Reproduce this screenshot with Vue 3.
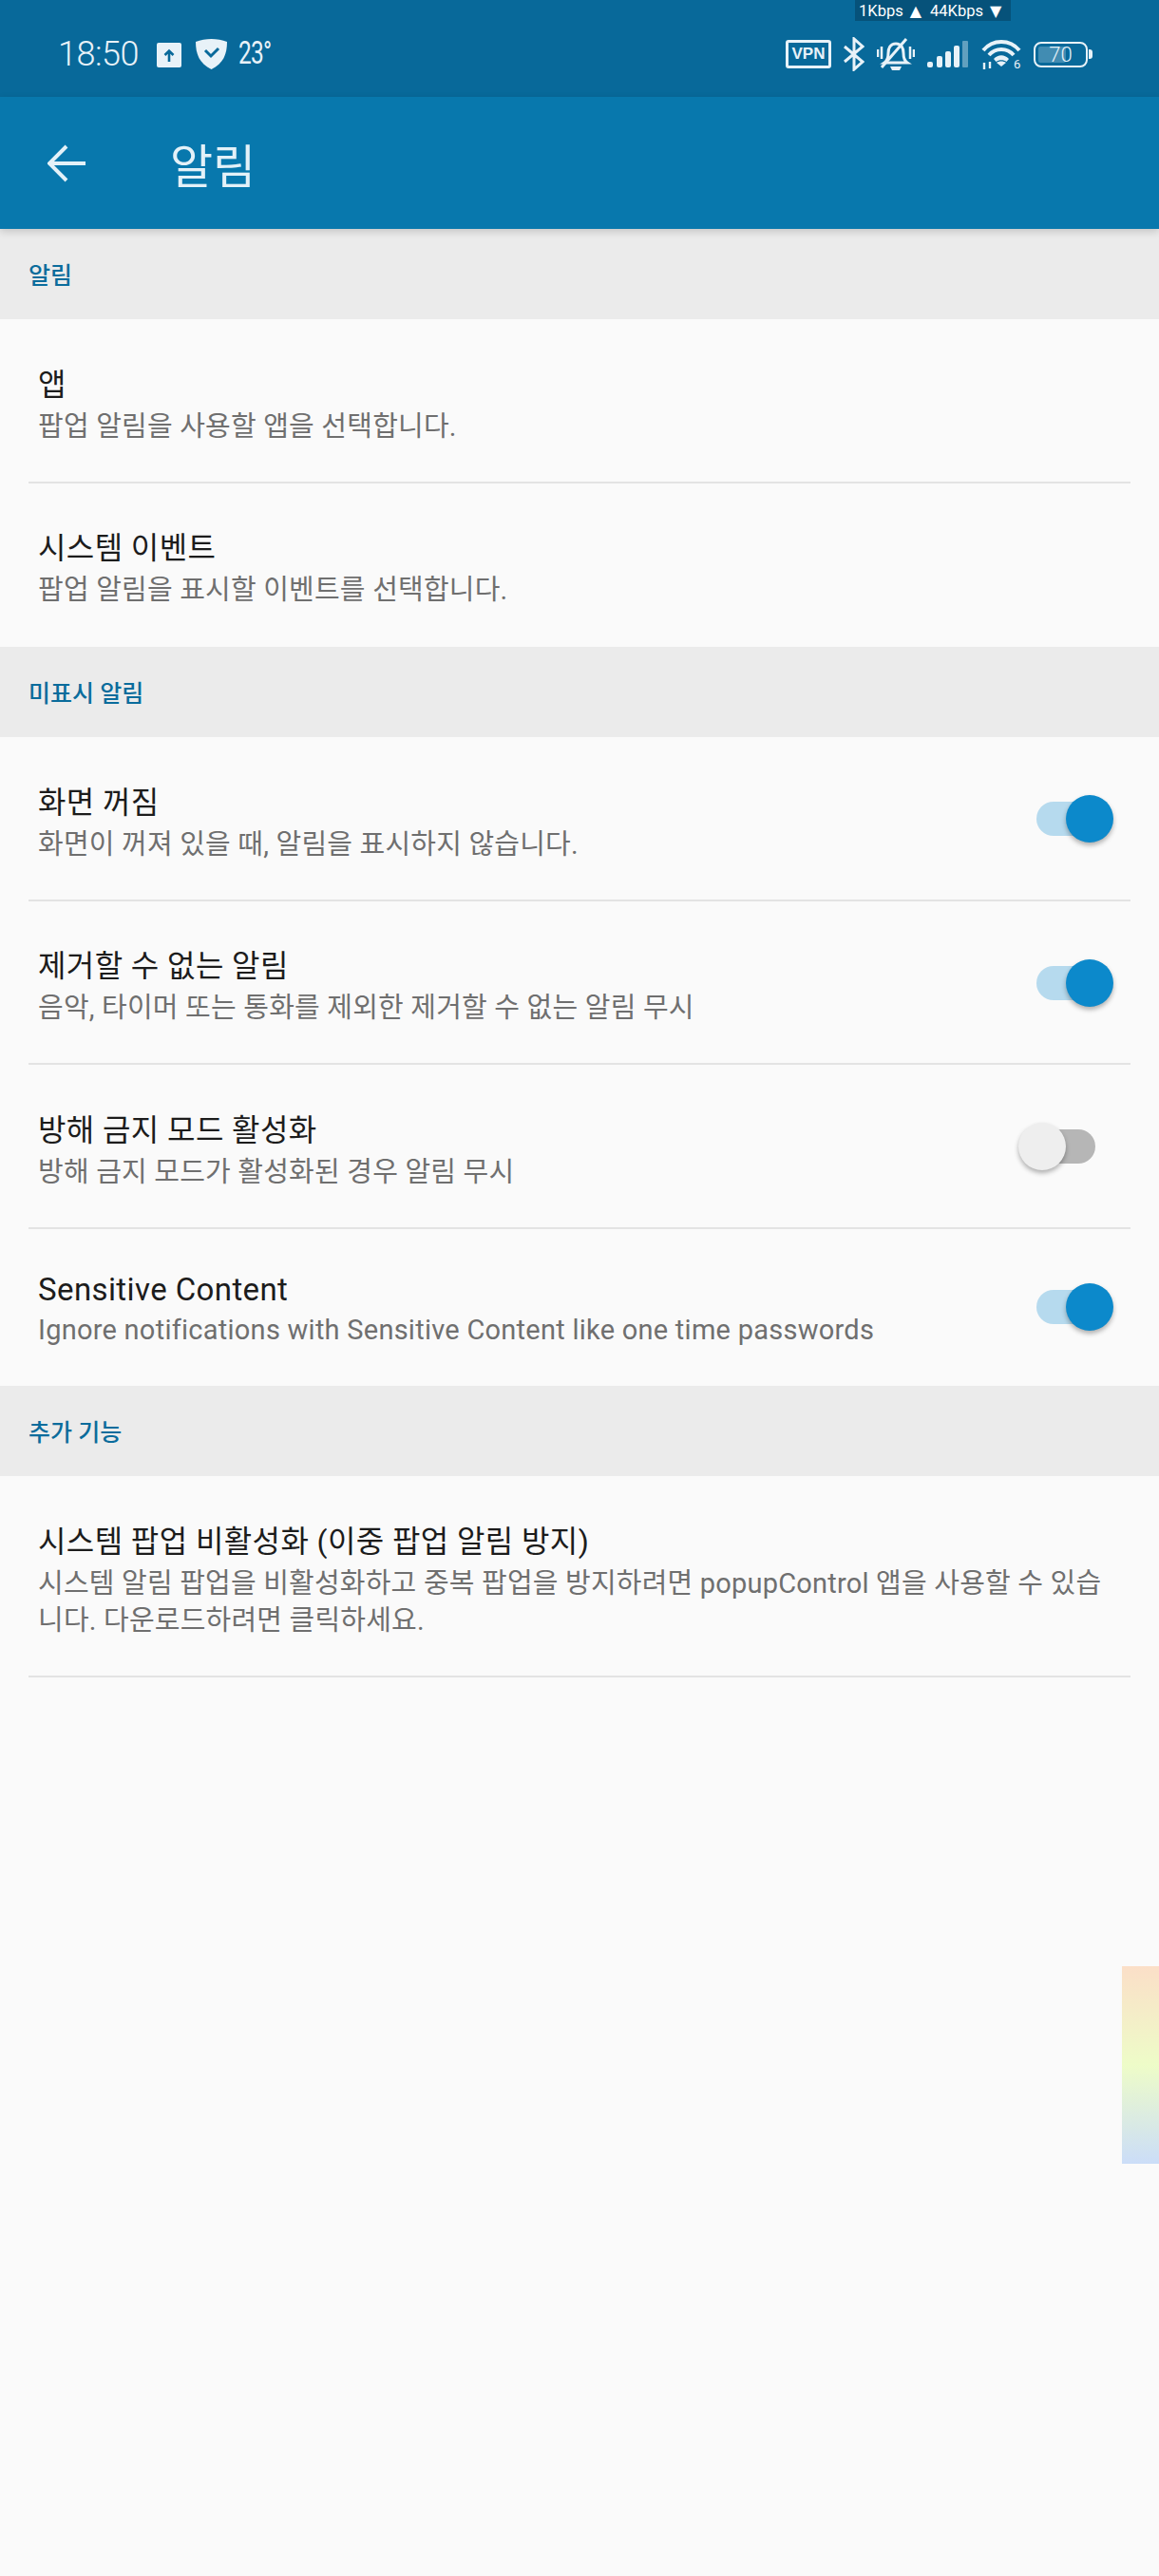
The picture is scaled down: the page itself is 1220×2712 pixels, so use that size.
<template>
  <div class="screen">
    <header class="status-bar">
      <div class="net-speed">
        <span>1Kbps</span><i class="tri">▲</i><span class="down">44Kbps</span><i class="tri">▼</i>
      </div>
      <div class="status-left">
        <span class="clock">18:50</span>
        <svg class="ic-upload" width="26" height="26" viewBox="0 0 26 26">
          <rect width="26" height="26" rx="2" fill="#e8f2f8" />
          <path d="M13 20V9M8.500 13 13 8.500l4.500 4.500" fill="none" stroke="#08699a" stroke-width="2.600" />
        </svg>
        <svg class="ic-shield" width="33" height="32" viewBox="0 0 33 32">
          <path d="M16.500 0C22 0 28 1 33 3c0 13-4 23-16.500 29C4 26 0 16 0 3 5 1 11 0 16.500 0Z" fill="#e8f2f8" />
          <path d="M10 12l6 6 8-8" fill="none" stroke="#08699a" stroke-width="3" />
        </svg>
        <span class="temp">23°</span>
      </div>
      <div class="status-right">
        <span class="vpn">VPN</span>
        <svg width="22" height="36" viewBox="0 0 22 36">
          <path d="M1 10 20 26 11 34V2l9 8L1 26" fill="none" stroke="#e8f2f8" stroke-width="3" />
        </svg>
        <svg width="40" height="34" viewBox="0 0 40 34">
          <path d="M20 6c-6 0-8 5-8 10 0 5-1 8-4 10h24c-3-2-4-5-4-10 0-5-2-10-8-10Z" fill="none" stroke="#e8f2f8" stroke-width="3" />
          <path d="M14 30h12l-2 4h-8Z" fill="#e8f2f8" />
          <path d="M31 1 5 31" stroke="#e8f2f8" stroke-width="3" />
          <path d="M1 12v8M5 9v13M35 9v13M39 12v8" stroke="#e8f2f8" stroke-width="2.500" />
        </svg>
        <svg width="44" height="28" viewBox="0 0 44 28">
          <rect x="0" y="22" width="6" height="6" rx="2" fill="#e8f2f8" />
          <rect x="10" y="16" width="6" height="12" rx="2" fill="#e8f2f8" />
          <rect x="19" y="11" width="6" height="17" rx="2" fill="#e8f2f8" />
          <rect x="28" y="5" width="6" height="23" rx="2" fill="#e8f2f8" />
          <rect x="37" y="0" width="6" height="28" rx="1" fill="#e8f2f8" opacity="0.4" />
        </svg>
        <svg width="44" height="38" viewBox="0 -3 44 38">
          <path d="M2 12C12 0 30 0 40 12M8 17c7-8 19-8 26 0" fill="none" stroke="#e8f2f8" stroke-width="4" />
          <path d="M13 21c5-5 11-5 16 0l-2.500 3c-3-2.500-8-2.500-11 0Z" fill="#e8f2f8" />
          <path d="M16 25c3-2 7-2 10 0l-5 4Z" fill="#e8f2f8" />
          <path d="M3 25v7M9 24v7" stroke="#e8f2f8" stroke-width="2.400" />
          <text x="34" y="31" class="wifi-six">6</text>
        </svg>
        <div class="battery">
          <div class="battery-fill"></div>
          <span>70</span>
        </div>
        <div class="battery-cap"></div>
      </div>
    </header>

    <nav class="toolbar">
      <svg width="40" height="40" viewBox="0 0 40 40">
        <path d="M40 20H3M20 2 2 20l18 18" fill="none" stroke="#e3f1f8" stroke-width="4" />
      </svg>
      <h1>알림</h1>
    </nav>

    <main>
      <section v-for="section in sections" :key="section.title">
        <h2 class="section-title">{{ section.title }}</h2>
        <div
          v-for="item in section.items"
          :key="item.title"
          class="pref"
          :class="{ 'no-line': item.noLine, tall: item.tall, latin: item.latin }"
        >
          <div class="pref-text">
            <div class="pref-title">{{ item.title }}</div>
            <div class="pref-desc">{{ item.desc }}</div>
          </div>
          <div v-if="item.on !== undefined" class="switch" :class="{ on: item.on }">
            <span class="thumb"></span>
          </div>
        </div>
      </section>
    </main>

    <div class="edge-light"></div>
  </div>
</template>

<script setup>
const sections = [
  {
    title: '알림',
    items: [
      { title: '앱', desc: '팝업 알림을 사용할 앱을 선택합니다.' },
      { title: '시스템 이벤트', desc: '팝업 알림을 표시할 이벤트를 선택합니다.', noLine: true }
    ]
  },
  {
    title: '미표시 알림',
    items: [
      { title: '화면 꺼짐', desc: '화면이 꺼져 있을 때, 알림을 표시하지 않습니다.', on: true },
      { title: '제거할 수 없는 알림', desc: '음악, 타이머 또는 통화를 제외한 제거할 수 없는 알림 무시', on: true },
      { title: '방해 금지 모드 활성화', desc: '방해 금지 모드가 활성화된 경우 알림 무시', on: false },
      {
        title: 'Sensitive Content',
        desc: 'Ignore notifications with Sensitive Content like one time passwords',
        on: true,
        noLine: true,
        latin: true
      }
    ]
  },
  {
    title: '추가 기능',
    items: [
      {
        title: '시스템 팝업 비활성화 (이중 팝업 알림 방지)',
        desc: '시스템 알림 팝업을 비활성화하고 중복 팝업을 방지하려면 popupControl 앱을 사용할 수 있습니다. 다운로드하려면 클릭하세요.',
        tall: true
      }
    ]
  }
];
</script>

<style>
html, body {
  margin: 0;
  background: #fafafa;
}
</style>

<style scoped>
.screen {
  position: relative;
  width: 1220px;
  height: 2712px;
  overflow: hidden;
  background: #fafafa;
  font-family: Roboto, "Noto Sans CJK KR", sans-serif;
}

.status-bar {
  position: relative;
  display: flex;
  justify-content: space-between;
  align-items: center;
  height: 102px;
  padding: 12px 70px 0 61px;
  box-sizing: border-box;
  background: #08699a;
  color: #e8f2f8;
}

.net-speed {
  position: absolute;
  top: 0;
  left: 900px;
  display: flex;
  align-items: center;
  width: 164px;
  height: 22px;
  padding-left: 4px;
  box-sizing: border-box;
  background: #06527a;
  color: #fff;
  font-size: 16.5px;
}

.net-speed .tri {
  margin-left: 7px;
  font-style: normal;
  font-size: 16px;
  font-family: "DejaVu Sans", sans-serif;
}

.net-speed .down {
  margin-left: 9px;
}

.status-left {
  display: flex;
  align-items: center;
}

.clock {
  width: 104px;
  font-size: 36px;
  font-weight: 300;
  letter-spacing: -0.5px;
}

.ic-upload {
  margin-top: 2px;
}

.ic-shield {
  margin-left: 15px;
}

.temp {
  margin-left: 12px;
  margin-top: -4px;
  font-size: 34px;
  letter-spacing: -1px;
  transform: scaleX(0.72);
  transform-origin: left;
}

.status-right {
  display: flex;
  align-items: center;
  gap: 13px;
}

.vpn {
  display: flex;
  align-items: center;
  justify-content: center;
  width: 48px;
  height: 30px;
  box-sizing: border-box;
  border: 3px solid #e8f2f8;
  border-radius: 3px;
  font-family: "Liberation Sans", sans-serif;
  font-size: 17px;
  font-weight: 700;
}

.wifi-six {
  fill: #e8f2f8;
  font-size: 13px;
  font-family: Roboto, sans-serif;
}

.battery {
  position: relative;
  display: flex;
  align-items: center;
  justify-content: center;
  width: 57px;
  height: 27px;
  margin-left: -2px;
  box-sizing: border-box;
  border: 2.5px solid #e8f2f8;
  border-radius: 8px;
}

.battery span {
  position: relative;
  font-size: 22px;
  font-weight: 300;
}

.battery-fill {
  position: absolute;
  left: 3px;
  top: 3px;
  bottom: 3px;
  width: 29px;
  border-radius: 2px;
  background: rgba(232, 242, 248, 0.26);
}

.battery-cap {
  width: 4px;
  height: 10px;
  margin-left: -12px;
  border-radius: 0 3px 3px 0;
  background: #e8f2f8;
}

.toolbar {
  position: relative;
  z-index: 1;
  display: flex;
  align-items: center;
  height: 139px;
  padding-left: 50px;
  box-sizing: border-box;
  background: #0878ad;
  box-shadow: 0 3px 8px rgba(0, 0, 0, 0.16);
}

.toolbar h1 {
  margin: 0 0 0 89px;
  color: #e3f1f8;
  font-size: 49px;
  font-weight: 400;
}

.section-title {
  display: flex;
  align-items: center;
  height: 95px;
  margin: 0;
  padding: 0 0 2px 30px;
  box-sizing: border-box;
  background: #ebebeb;
  color: #0a6c9c;
  font-size: 25px;
  font-weight: 500;
}

.pref {
  position: relative;
  display: flex;
  justify-content: space-between;
  align-items: center;
  height: 172.5px;
  box-sizing: border-box;
  padding: 0 67px 0 40px;
}

.pref::after {
  content: "";
  position: absolute;
  left: 30px;
  right: 30px;
  bottom: 0;
  height: 2px;
  background: #e3e3e3;
}

.pref.no-line::after {
  display: none;
}

.pref.tall {
  height: 212px;
  padding-right: 50px;
}

.pref.latin {
  height: 165.5px;
}

.pref-text {
  padding-top: 6px;
}

.latin .pref-text {
  padding-top: 3px;
}

.pref-title {
  color: #1c1c1c;
  font-size: 32px;
  line-height: 46px;
  letter-spacing: 0.4px;
}

.pref-desc {
  margin-top: 2px;
  color: #6f6f6f;
  font-size: 29px;
  line-height: 39px;
  letter-spacing: 0.2px;
}

.latin .pref-title {
  font-size: 33px;
  letter-spacing: 0.4px;
}

.latin .pref-desc {
  margin-top: 0;
  font-size: 29px;
  letter-spacing: 0.25px;
}

.switch {
  position: relative;
  width: 62px;
  height: 36px;
  border-radius: 18px;
  background: #b6daee;
}

.thumb {
  position: absolute;
  top: -7px;
  right: -19px;
  width: 50px;
  height: 50px;
  border-radius: 50%;
  background: #0c89cb;
  box-shadow: 0 3px 5px rgba(0, 0, 0, 0.3);
}

.switch:not(.on) {
  background: #b6b6b6;
}

.switch:not(.on) .thumb {
  right: auto;
  left: -19px;
  background: #eeeeee;
}

.edge-light {
  position: absolute;
  right: 0;
  top: 2070px;
  width: 39px;
  height: 208px;
  background: linear-gradient(#fbdfc8, #eefcc8 50%, #cbddf8);
}
</style>
